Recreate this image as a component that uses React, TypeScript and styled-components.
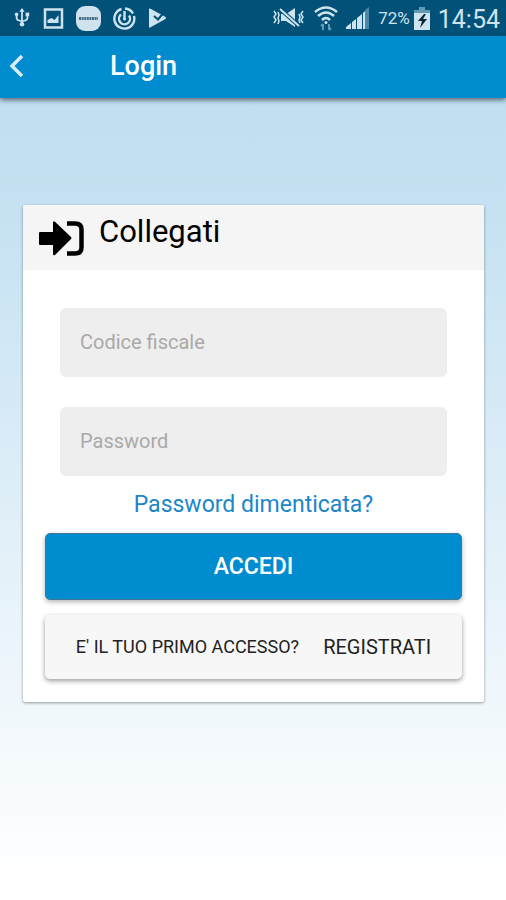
import React from "react";
import styled, { createGlobalStyle } from "styled-components";

const GlobalStyle = createGlobalStyle`
  *, *::before, *::after { box-sizing: border-box; }
  body {
    margin: 0;
    background: #fff;
    font-family: Roboto, "Liberation Sans", sans-serif;
    color: #000;
  }
`;

const Screen = styled.div`
  display: flex;
  flex-direction: column;
  min-height: 100vh;
  background: linear-gradient(#bfdff1 98px, #c5e1f2 205px, #fff 880px);
`;

const StatusBar = styled.div`
  display: flex;
  align-items: center;
  justify-content: space-between;
  height: 36px;
  padding: 0 6px 0 13px;
  background: #015179;
  color: #cfe3ee;
`;

const StatusGroup = styled.div<{ $gap: number }>`
  display: flex;
  align-items: center;
  gap: ${(p) => p.$gap}px;
`;

const Glyph = styled.svg`
  display: block;
  flex: none;
`;

const Battery = styled.span`
  display: flex;
  align-items: center;
  gap: 4px;
  font-size: 17px;
`;

const Clock = styled.time`
  padding-top: 3px;
  font-size: 25px;
  line-height: 33px;
`;

const TopBar = styled.header`
  display: flex;
  align-items: center;
  gap: 76px;
  height: 62px;
  padding-bottom: 2px;
  background: #008ccf;
  color: #fff;
  box-shadow: 0 2px 5px rgba(0, 0, 0, 0.55);
`;

const BackButton = styled.button`
  display: flex;
  align-items: center;
  width: 34px;
  height: 60px;
  padding: 0 0 0 8px;
  border: 0;
  background: none;
  color: #d9edf8;
`;

const Title = styled.h1`
  margin: 0;
  font-size: 27px;
  font-weight: 500;
  line-height: 36px;
`;

const Content = styled.main`
  padding: 107px 22px 24px 23px;
`;

const Card = styled.section`
  background: #fff;
  border-radius: 2px;
  box-shadow: 0 1px 3px rgba(0, 0, 0, 0.4);
`;

const CardHeader = styled.div`
  display: flex;
  align-items: center;
  gap: 14px;
  height: 65px;
  padding: 0 15px;
  background: #f5f5f5;
  border-radius: 2px 2px 0 0;
`;

const CardTitle = styled.h2`
  margin: 0;
  padding-bottom: 12px;
  font-size: 31px;
  font-weight: 400;
  line-height: 40px;
`;

const Form = styled.form`
  display: flex;
  flex-direction: column;
  padding: 38px 22px 23px;
`;

const Fields = styled.div`
  display: flex;
  flex-direction: column;
  gap: 30px;
  padding: 0 15px;
`;

const Field = styled.input`
  width: 100%;
  height: 69px;
  padding: 0 20px 2px;
  border: 0;
  border-radius: 6px;
  background: #eee;
  color: #222;
  font: 400 20px Roboto, "Liberation Sans", sans-serif;

  &::placeholder {
    color: #a9a9a9;
    opacity: 1;
  }
`;

const ForgotLink = styled.a`
  align-self: center;
  padding: 14px 0;
  color: #1b86c8;
  font-size: 23px;
  line-height: 29px;
  text-decoration: none;
`;

const ActionButton = styled.button<{ $primary?: boolean }>`
  display: flex;
  align-items: center;
  justify-content: center;
  gap: 24px;
  height: ${(p) => (p.$primary ? 67 : 64)}px;
  margin-top: ${(p) => (p.$primary ? 0 : 15)}px;
  padding: 0;
  border: ${(p) => (p.$primary ? "1px solid #3d7896" : "0")};
  border-radius: 5px;
  background: ${(p) => (p.$primary ? "#008ccf" : "#f7f7f7")};
  color: ${(p) => (p.$primary ? "#fff" : "#222")};
  font: ${(p) => (p.$primary ? 500 : 400)} 23px Roboto, "Liberation Sans", sans-serif;
  text-transform: uppercase;
  white-space: nowrap;
  box-shadow: 0 2px 5px rgba(0, 0, 0, ${(p) => (p.$primary ? 0.3 : 0.4)});
`;

const Prompt = styled.span<{ $size: number }>`
  font-size: ${(p) => p.$size}px;
  line-height: 24px;
`;

const UsbIcon = () => (
  <Glyph width="18" height="20" viewBox="0 0 20 22" fill="none" stroke="currentColor" strokeWidth="2">
    <path d="M10 3v15M4 7v4q0 3 6 3.500M16 7v4q0 3-6 3.500" />
    <path d="M10 0l3 4H7z" fill="currentColor" stroke="none" />
    <circle cx="4" cy="7" r="2" fill="currentColor" stroke="none" />
    <path d="M14 5h4v4h-4z" fill="currentColor" stroke="none" />
    <circle cx="10" cy="18" r="2.500" fill="currentColor" stroke="none" />
  </Glyph>
);

const PictureIcon = () => (
  <Glyph width="21" height="21" viewBox="0 0 20 21" fill="none" stroke="currentColor" strokeWidth="2.500">
    <path d="M1.500 1.500h17v18h-17z" />
    <path d="M4 15v-3l4-2 3 2 4-5v8z" fill="currentColor" stroke="none" />
  </Glyph>
);

const BadgeIcon = () => (
  <Glyph width="25" height="25" viewBox="0 0 25 25">
    <rect width="25" height="25" rx="9" fill="#cfe3ee" />
    <path d="M3 12.500h19" stroke="#476e85" strokeWidth="3" strokeDasharray="2 .6" />
  </Glyph>
);

const SwirlIcon = () => (
  <Glyph width="23" height="23" viewBox="0 0 23 23" fill="none" stroke="currentColor" strokeWidth="2.400">
    <path d="M8.500 2A10 10 0 1 0 21 9M12 1.500a10 10 0 0 1 8 5" />
    <path d="M8 7.500a5.500 5.500 0 1 0 8 1M11.500 4v8" />
    <circle cx="11.500" cy="12" r="1.500" fill="currentColor" stroke="none" />
  </Glyph>
);

const PlayIcon = () => (
  <Glyph width="20" height="20" viewBox="0 0 20 20">
    <path d="M1 1q0-1 2 0l14.500 8q1.500 1 0 2L3 19q-2 1-2 0z" fill="#cfe3ee" />
    <path d="M6 8l4 3.500L17 3" fill="none" stroke="#015179" strokeWidth="2" />
  </Glyph>
);

const MuteIcon = () => (
  <Glyph width="34" height="22" viewBox="0 0 34 22" fill="none" stroke="currentColor" strokeWidth="2">
    <path d="M2 4l2 3-2 3 2 3-2 3M6 5l1 3-1 3 1 3-1 3M31 4l-2 3 2 3-2 3 2 3M27 7l1 3-1 3 1 3" strokeWidth="1.500" />
    <path d="M9 7h5l9-6v19l-9-6H9z" fill="currentColor" stroke="none" />
    <path d="M8 2l19 17" stroke="#015179" strokeWidth="4" />
    <path d="M8 2l19 17" />
  </Glyph>
);

const WifiIcon = () => (
  <Glyph width="24" height="26" viewBox="0 0 24 26" fill="none" stroke="currentColor" strokeWidth="2.500">
    <path d="M1 7q11-9 22 0M4 11q8-7 16 0M8 15q4-4 8 0" />
    <circle cx="12" cy="17.500" r="1.500" fill="currentColor" stroke="none" />
    <path d="M9 25v-6M7 21l2-2M15 19v6M17 23l-2 2" stroke="#6499b4" strokeWidth="2" />
  </Glyph>
);

const SignalIcon = () => (
  <Glyph width="24" height="22" viewBox="0 0 24 22" fill="currentColor">
    <path d="M0 22v-2l5-4v6zM6 22v-7l4-3v10zM11 22V11l5-4v15z" />
    <path d="M17 22V6l2-2v18z" />
    <path d="M19 22V3l4-3v22z" fill="#4c87a7" />
  </Glyph>
);

const BatteryIcon = () => (
  <Glyph width="16" height="23" viewBox="0 0 16 23">
    <path d="M5 0h6v3h5v5H0V3h5z" fill="#6499b4" />
    <path d="M0 6h16v17H0z" fill="#cfe3ee" />
    <path d="M10 7l-6 7h4l-2 7 7-9H9l3-5z" fill="#06273a" />
  </Glyph>
);

const BackIcon = () => (
  <Glyph width="16" height="24" viewBox="0 0 16 24" fill="none" stroke="currentColor" strokeWidth="3.500">
    <path d="M14 2L4 12l10 10" />
  </Glyph>
);

const LoginIcon = () => (
  <Glyph width="47" height="36" viewBox="0 0 47 36">
    <path d="M2 12h13V2.500q0-2 2-.8l16 15.300q1 1 0 2L17 35q-2 1-2-1V25H2q-1 0-1-1V13q0-1 1-1z" fill="#000" />
    <path d="M29 3.500h8q6.500 0 6.500 6v18q0 6-6.500 6h-8" fill="none" stroke="#000" strokeWidth="4.500" />
  </Glyph>
);

export default function App() {
  return (
    <>
      <GlobalStyle />
      <Screen>
        <StatusBar>
          <StatusGroup $gap={12}>
            <UsbIcon />
            <PictureIcon />
            <BadgeIcon />
            <SwirlIcon />
            <PlayIcon />
          </StatusGroup>
          <StatusGroup $gap={8}>
            <MuteIcon />
            <WifiIcon />
            <SignalIcon />
            <Battery>
              72%
              <BatteryIcon />
            </Battery>
            <Clock>14:54</Clock>
          </StatusGroup>
        </StatusBar>
        <TopBar>
          <BackButton type="button" aria-label="Indietro">
            <BackIcon />
          </BackButton>
          <Title>Login</Title>
        </TopBar>
        <Content>
          <Card>
            <CardHeader>
              <LoginIcon />
              <CardTitle>Collegati</CardTitle>
            </CardHeader>
            <Form onSubmit={(e) => e.preventDefault()}>
              <Fields>
                <Field type="text" placeholder="Codice fiscale" aria-label="Codice fiscale" />
                <Field type="password" placeholder="Password" aria-label="Password" />
              </Fields>
              <ForgotLink href="#password">Password dimenticata?</ForgotLink>
              <ActionButton $primary type="submit">
                Accedi
              </ActionButton>
              <ActionButton type="button">
                <Prompt $size={18}>E' il tuo primo accesso?</Prompt>
                <Prompt $size={20}>Registrati</Prompt>
              </ActionButton>
            </Form>
          </Card>
        </Content>
      </Screen>
    </>
  );
}
